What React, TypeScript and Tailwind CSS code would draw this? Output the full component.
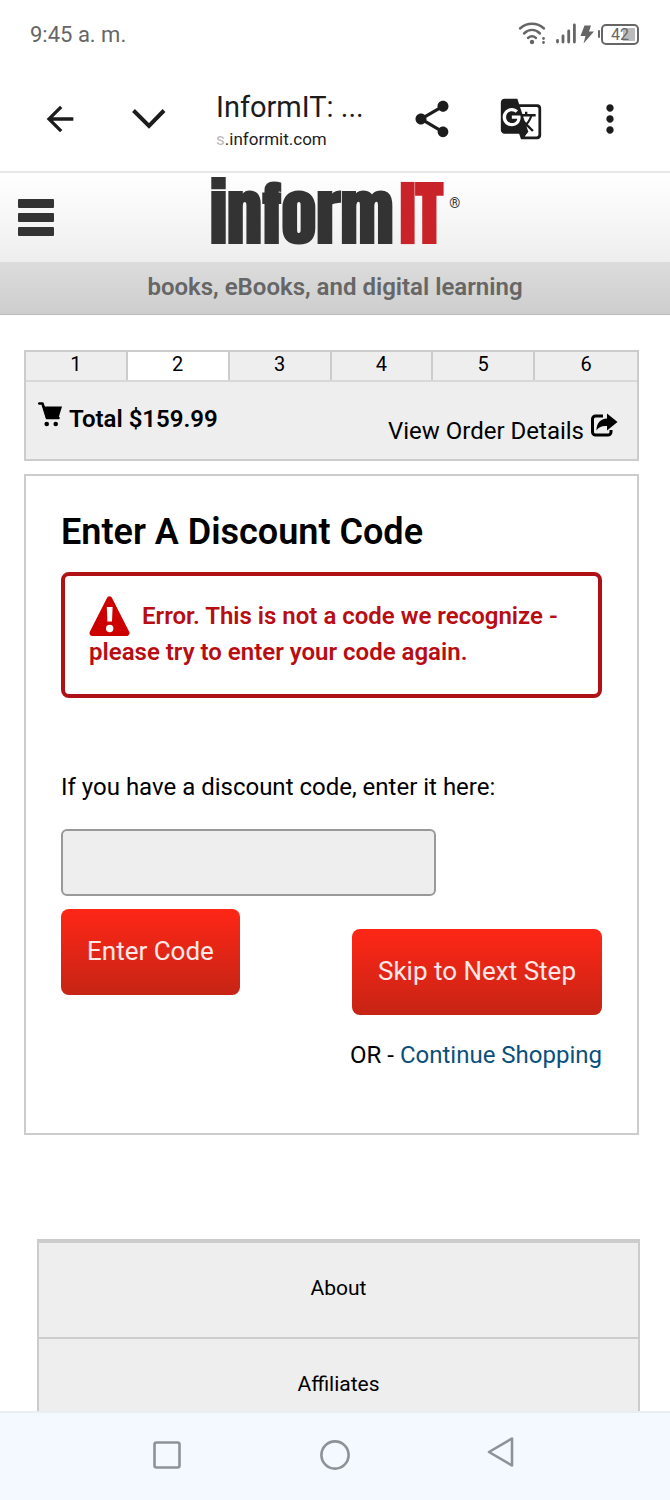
import React, { useState } from 'react';
import { MdArrowBack, MdGTranslate, MdMoreVert, MdShare } from 'react-icons/md';

const steps = [1, 2, 3, 4, 5, 6];
const currentStep = 2;

const footerLinks = ['About', 'Affiliates'];

function WifiIcon() {
  return (
    <svg width="28" height="24" viewBox="0 0 28 24" fill="none" stroke="#666" strokeWidth="2.4" strokeLinecap="round">
      <path d="M2 6.500C9 .2 19 .2 26 6.500" />
      <path d="M6 11.500c5-4.600 11-4.600 16 0" />
      <path d="M10 16c2.600-2.200 5.400-2.200 8 0" />
      <circle cx="14" cy="20" r="2.200" fill="#666" stroke="none" />
      <path d="M25.500 16.500v.1M25.500 20.500v.1" strokeWidth="2.800" />
    </svg>
  );
}

function SignalIcon() {
  return (
    <svg width="20" height="22" viewBox="0 0 20 22" fill="none" stroke="#666" strokeWidth="2.800" strokeLinecap="round">
      <path d="M1.500 17.500v1.500M7 13v6M12.700 8v11M18.400 2v17" />
    </svg>
  );
}

function BoltIcon() {
  return (
    <svg width="14" height="19" viewBox="0 0 14 19" fill="#666">
      <path d="M4.500.5h6.500L9 6.500h5L3.500 18.500 5.500 11H.5z" />
    </svg>
  );
}

function CartIcon() {
  return (
    <svg width="24" height="26" viewBox="0 0 24 26" className="shrink-0">
      <path d="M1.200 2.500H4.500L9 17H20.500" fill="none" stroke="#000" strokeWidth="2.600" strokeLinecap="round" strokeLinejoin="round" />
      <path d="M4.500 5.500H24L20.500 17H8z" />
      <circle cx="8.700" cy="23" r="2.300" />
      <circle cx="17.700" cy="23" r="2.300" />
    </svg>
  );
}

function OrderDetailsIcon() {
  return (
    <svg width="27" height="24" viewBox="0 0 27 24" className="shrink-0">
      <path d="M12 3H4.500a3 3 0 0 0-3 3v13a3 3 0 0 0 3 3h12.500a3 3 0 0 0 3-3V17" fill="none" stroke="#000" strokeWidth="3" />
      <path d="M16 .5 26.500 9 16 17.500V13C11 12.500 7.500 14 5.500 17.500 5.500 10 9.500 5.700 16 5.500z" />
    </svg>
  );
}

function WarningIcon() {
  return (
    <svg width="41" height="41" viewBox="0 0 41 41" className="mr-3 -mb-1 inline-block align-[-9px]">
      <path d="M20.500 3.500 37.500 37h-34z" fill="#c00" stroke="#c00" strokeWidth="6" strokeLinejoin="round" />
      <path d="M17.800 11h5.800l-.6 14.500h-4.600z" fill="#fff" />
      <circle cx="20.700" cy="32.500" r="3.700" fill="#fff" />
    </svg>
  );
}

function StatusBar() {
  return (
    <div className="flex h-[68px] shrink-0 items-center justify-between pr-[31px] pl-[30px] text-[#666]">
      <span className="text-[22px]">9:45 a. m.</span>
      <div className="flex items-center">
        <WifiIcon />
        <div className="ml-2.5 flex items-center gap-1">
          <SignalIcon />
          <BoltIcon />
          <div className="flex items-center gap-px">
            <span className="h-2 w-0.5 rounded-sm bg-[#666]" />
            <span className="h-[21px] w-[38px] rounded-[5px] border-2 border-[#666] bg-linear-to-r from-transparent from-60% to-[#bbb] to-60% bg-clip-content p-0.5 text-center text-[16px] leading-[13px]">
              42
            </span>
          </div>
        </div>
      </div>
    </div>
  );
}

function BrowserBar() {
  return (
    <div className="flex h-[105px] shrink-0 items-center border-b-2 border-[#e8e8e8] pr-[38px] pb-px pl-10 text-[#1c1c1c]">
      <button type="button" aria-label="Back" className="mr-12">
        <MdArrowBack size={40} />
      </button>
      <button type="button" aria-label="Minimize" className="mr-12">
        <svg width="40" height="40" viewBox="0 0 40 40" fill="none" stroke="currentColor" strokeWidth="4">
          <path d="M5.500 11.500 21 27l15-15.500" />
        </svg>
      </button>
      <div className="mr-auto pt-1">
        <p className="text-[29px] leading-9">InformIT: ...</p>
        <p className="text-[17px] leading-7">
          <span className="text-[#bbb]">s</span>.informit.com
        </p>
      </div>
      <button type="button" aria-label="Share" className="mr-[45px]">
        <MdShare size={44} />
      </button>
      <button type="button" aria-label="Translate" className="mr-[45px]">
        <MdGTranslate size={44} />
      </button>
      <button type="button" aria-label="More">
        <MdMoreVert size={44} />
      </button>
    </div>
  );
}

function SiteHeader() {
  return (
    <header>
      <div className="grid h-[89px] grid-cols-[210px_1fr] items-center bg-linear-to-b from-white to-[#eee]">
        <button type="button" aria-label="Menu" className="ml-[18px] flex w-9 flex-col gap-[5px]">
          <span className="h-[9px] rounded-[1px] bg-[#333]" />
          <span className="h-[9px] rounded-[1px] bg-[#333]" />
          <span className="h-[9px] rounded-[1px] bg-[#333]" />
        </button>
        <a href="#" className="flex items-start pb-2 font-['Impact','Anton','Roboto_Condensed','Liberation_Sans_Narrow',sans-serif] text-[70px] leading-[76px] font-black text-[#333]">
          <span>inform</span>
          <span className="ml-1.5 text-[#c92228]">IT</span>
          <span className="mt-[19px] ml-1.5 font-['Roboto'] text-[14px] leading-4 font-normal">®</span>
        </a>
      </div>
      <p className="h-[53px] border-b border-[#bbb] bg-linear-to-b from-[#dcdcdc] to-[#cecece] text-center text-[24px] leading-[50px] font-semibold text-[#666]">
        books, eBooks, and digital learning
      </p>
    </header>
  );
}

function OrderSummary() {
  return (
    <section className="mt-[35px] mr-[31px] ml-6 border-2 border-[#ccc] bg-[#eee]">
      <ol className="grid grid-cols-6 divide-x-2 divide-[#ccc] border-b-2 border-[#d8d8d8]">
        {steps.map((step) => (
          <li
            key={step}
            className={`h-7 text-center text-[20px] leading-6 ${step === currentStep ? 'bg-white' : ''}`}
          >
            {step}
          </li>
        ))}
      </ol>
      <div className="flex h-[77px] justify-between pr-[19px] pl-3">
        <p className="mt-[19px] flex items-start gap-[7px] text-[24px] leading-9 font-semibold">
          <CartIcon />
          Total $159.99
        </p>
        <a href="#" className="mt-[31px] flex items-start gap-[7px] text-[24px] leading-9">
          View Order Details
          <OrderDetailsIcon />
        </a>
      </div>
    </section>
  );
}

function DiscountForm() {
  const [code, setCode] = useState('');

  return (
    <section className="mt-[13px] mr-[31px] ml-6 border-2 border-[#ccc] px-[35px] pt-8 pb-[60px]">
      <h1 className="text-[36px] leading-[48px] font-semibold">Enter A Discount Code</h1>
      <div role="alert" className="mt-4 rounded-lg border-4 border-[#b01116] px-6 pt-5 pb-6 text-[24px] leading-9 font-semibold text-[#b80d12]">
        <WarningIcon />
        Error. This is not a code we recognize - please try to enter your code again.
      </div>
      <form onSubmit={(e) => e.preventDefault()}>
        <label htmlFor="code" className="mt-[71px] block text-[24px] leading-9">
          If you have a discount code, enter it here:
        </label>
        <input
          id="code"
          type="text"
          value={code}
          onChange={(e) => setCode(e.target.value)}
          className="mt-6 block h-[67px] w-[375px] max-w-full rounded-md border-2 border-[#999] bg-[#eee] px-4 text-[24px]"
        />
        <div className="mt-[13px] flex items-start justify-between">
          <button type="submit" className="h-[86px] rounded-lg bg-linear-to-b from-[#ff2616] to-[#c62415] px-[26px] pb-0.5 text-[26px] text-white/90">
            Enter Code
          </button>
          <button type="button" className="mt-5 h-[86px] rounded-lg bg-linear-to-b from-[#ff2616] to-[#c62415] px-[26px] pb-0.5 text-[26px] text-white/90">
            Skip to Next Step
          </button>
        </div>
      </form>
      <p className="mt-[22px] text-right text-[24px] leading-9">
        OR - <a href="#" className="text-[#0a4f7d]">Continue Shopping</a>
      </p>
    </section>
  );
}

function NavigationBar() {
  return (
    <nav className="flex h-[89px] shrink-0 items-center justify-center gap-[136px] border-t-2 border-[#e8eef2] bg-[#f4f9ff] pb-1 text-[#8e9196]">
      <button type="button" aria-label="Recent apps">
        <svg width="32" height="32" viewBox="0 0 32 32" fill="none" stroke="currentColor" strokeWidth="2.600">
          <rect x="3.500" y="3.500" width="25" height="25" rx="2" />
        </svg>
      </button>
      <button type="button" aria-label="Home">
        <svg width="32" height="32" viewBox="0 0 32 32" fill="none" stroke="currentColor" strokeWidth="2.600">
          <circle cx="16" cy="16" r="13.600" />
        </svg>
      </button>
      <button type="button" aria-label="Back" className="pb-1.5">
        <svg width="32" height="32" viewBox="0 0 32 32" fill="none" stroke="currentColor" strokeWidth="2.600" strokeLinejoin="round">
          <path d="M25 2.500v27L2 16z" />
        </svg>
      </button>
    </nav>
  );
}

export default function App() {
  return (
    <div className="flex h-screen flex-col bg-white font-['Roboto',sans-serif] text-black">
      <StatusBar />
      <BrowserBar />
      <div className="flex-1 overflow-y-auto [scrollbar-width:none]">
        <SiteHeader />
        <main>
          <OrderSummary />
          <DiscountForm />
        </main>
        <footer className="mt-[104px] mr-[30px] ml-[37px] border-x-2 border-t-4 border-[#ccc] bg-[#eee]">
          {footerLinks.map((link) => (
            <a key={link} href="#" className="block border-b-2 border-[#ccc] pt-[27px] pb-[31px] text-center text-[21px] leading-9">
              {link}
            </a>
          ))}
        </footer>
      </div>
      <NavigationBar />
    </div>
  );
}
